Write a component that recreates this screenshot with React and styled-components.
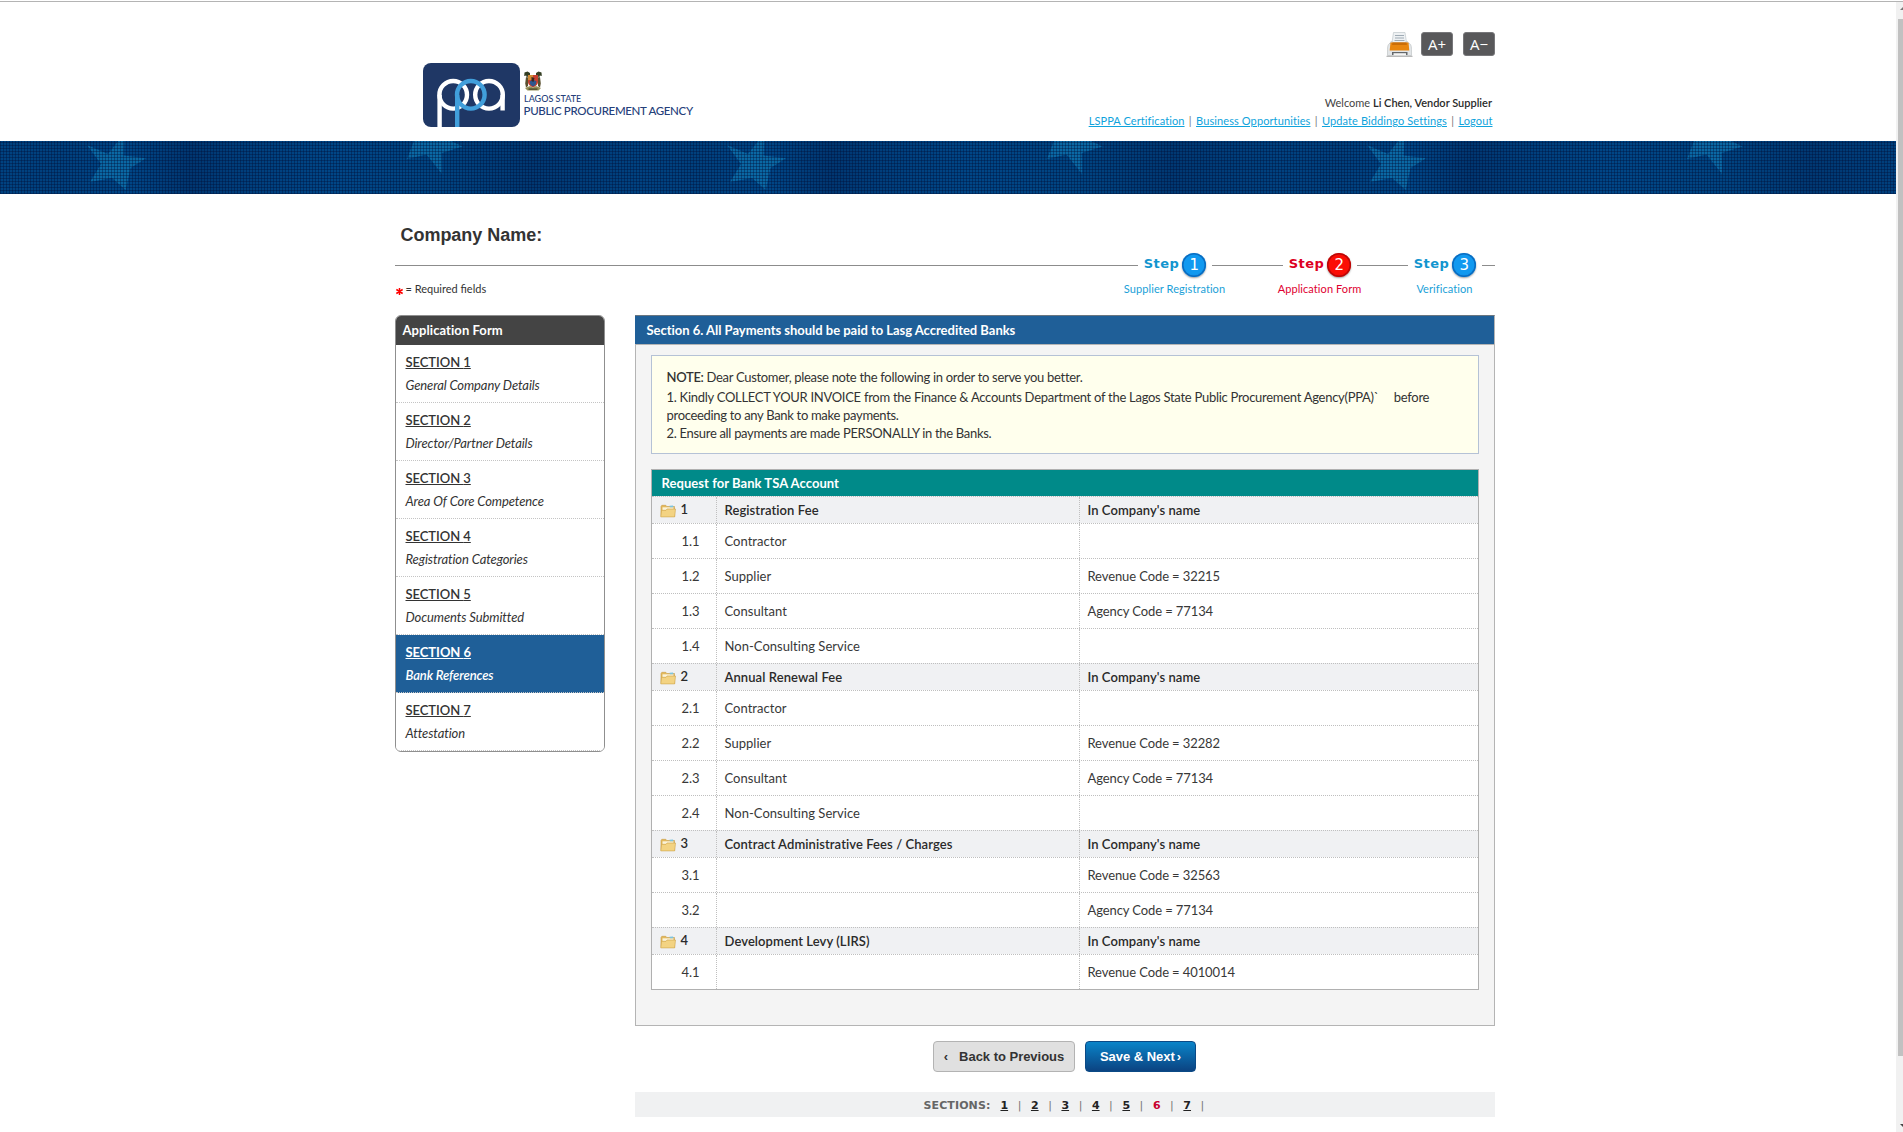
import React from 'react';
import styled, { createGlobalStyle } from 'styled-components';

const Global = createGlobalStyle`
  * { box-sizing: border-box; }
  body { margin: 0; background: #fff; color: #333; font: 13px Lato, sans-serif; }
  a { color: inherit; }
`;

const arial = '"Liberation Sans", Arial, sans-serif';
const verdana = '"DejaVu Sans", Verdana, sans-serif';

const Window = styled.div`display: flex; height: 1132px; overflow: hidden;`;
const Page = styled.div`flex: 1; min-width: 0; border-top: 1px solid #b4b4b4; margin-top: 1px;`;
const Container = styled.div`width: 1100px; margin-left: 395px;`;

/* scrollbar */
const Scrollbar = styled.div`
  width: 7px; background: #f1f1f1; border-top: 1px solid #b4b4b4; margin-top: 1px;
  display: flex; flex-direction: column; align-items: flex-end; padding-top: 17px;
`;
const Thumb = styled.div`flex: none; width: 5px; height: 1037px; background: #c1c1c1;`;
const Arrow = styled.svg`display: block; flex: none; width: 5px; height: 8px; margin-top: ${p => (p.$down ? 65 : -14)}px; margin-bottom: ${p => (p.$down ? 0 : 6)}px;`;

/* header */
const Header = styled.header`height: 139px; display: flex; justify-content: space-between;`;
const Brand = styled.div`display: flex; margin: 61px 0 0 28px; gap: 4px;`;
const BrandText = styled.div`display: flex; flex-direction: column; padding-top: 8px; color: #25407a; white-space: nowrap;`;
const BrandState = styled.div`font-size: 9px; line-height: 15px; font-weight: 500;`;
const BrandName = styled.div`font-size: 11.5px; line-height: 11px; font-weight: 500; letter-spacing: -0.33px; margin: -1px 0 0 -0.5px;`;
const HeaderRight = styled.div`display: flex; flex-direction: column; align-items: flex-end; padding-top: 30px;`;
const Tools = styled.div`display: flex; align-items: center; height: 24px; margin-bottom: 38px;`;
const SizeButton = styled.div`
  width: 32px; height: 24px; border-radius: 3px; background: #58585a; color: #fff; border: 1px solid #77777a;
  display: flex; align-items: center; justify-content: center; font: 15px "Open Sans", sans-serif; margin-left: ${p => p.$gap}px;
`;
const Welcome = styled.div`font-size: 11px; line-height: 18px; padding-right: 3px; color: #444; b { color: #2a2a2a; font-weight: 600; }`;
const Links = styled.nav`display: flex; font-size: 11px; line-height: 18px; padding-right: 2.5px; color: #0fa3dc; letter-spacing: 0.105px;`;
const Bar = styled.span`width: 11.5px; text-align: center; color: #777;`;

/* banner */
const Banner = styled.div`
  height: 53px; position: relative; overflow: hidden;
  background: repeating-linear-gradient(90deg, #004280 0, #00407d 60px, #004686 130px, #003670 190px, #003e7b 240px, #004686 330px, #004481 440px, #003872 530px, #004280 640px);
  &::after {
    content: ''; position: absolute; inset: 0;
    background:
      repeating-linear-gradient(0deg, rgba(0, 15, 55, 0.38) 0 1px, transparent 1px 3px),
      repeating-linear-gradient(90deg, rgba(0, 15, 55, 0.38) 0 1px, transparent 1px 3px);
  }
`;
const Stars = styled.svg`display: block;`;

/* title and steps */
const Title = styled.h1`margin: 0; padding: 25px 0 0 5.5px; font: bold 18px/32px ${arial}; letter-spacing: -0.03px; color: #333;`;
const Steps = styled.div`display: grid; grid-template: 29px 18px / 743px 74px 71px 74px 51px 74px 13px; align-items: center;`;
const Rule = styled.div`height: 1px; background: #8c8c8c;`;
const Step = styled.div`display: flex; align-items: center; justify-content: center; gap: 3px; color: ${p => p.$color};`;
const StepWord = styled.span`font: bold 13px/16px ${verdana}; letter-spacing: 0.5px; margin: -4px 0 0;`;
const StepDot = styled.span`
  width: 24px; height: 24px; border-radius: 50%; display: flex; align-items: center; justify-content: center;
  background: radial-gradient(circle at 50% 45%, ${p => p.$from} 0 55%, ${p => p.$to} 100%); color: #fff; font: 15px/24px ${verdana};
  margin-top: -1px; padding-bottom: 1px;
  box-shadow: inset 0 0 0 1.5px ${p => p.$edge}, 0 1px 2px rgba(0, 0, 0, 0.4);
`;
const StepLabel = styled.div`display: flex; justify-content: center; white-space: nowrap; margin-left: -1px; font-size: 11px; line-height: 18px; letter-spacing: 0.08px; color: ${p => p.$color};`;
const Required = styled.div`display: flex; font-size: 11px; line-height: 18px; padding-left: 0.5px; gap: 3px;`;
const Asterisk = styled.svg`width: 7px; height: 7px; margin-top: 8px;`;

/* columns */
const Columns = styled.div`display: flex; gap: 30px; align-items: flex-start; margin-top: 17px;`;
const Sidebar = styled.aside`width: 210px; border: 1px solid #8f8f8f; border-radius: 6px; overflow: hidden;`;
const SidebarHead = styled.div`height: 29px; padding-left: 6.5px; background: #444; color: #fff; font-weight: 700; line-height: 28px; letter-spacing: 0.07px;`;
const SideItem = styled.div`
  height: 58px; padding: 6px 9.5px 0; line-height: 23px; color: ${p => (p.$active ? '#fff' : '#333')};
  background: ${p => (p.$active ? '#1f5f98' : '#fff')}; border-bottom: 1px dotted #c4c4c4;
`;
const SideLink = styled.a`display: block; font-weight: ${p => (p.$active ? 700 : 600)}; letter-spacing: -0.05px; text-decoration: underline; text-underline-offset: 1px;`;
const SideText = styled.div`font-style: italic; font-weight: ${p => (p.$active ? 600 : 400)}; letter-spacing: -0.1px;`;

const Content = styled.main`width: 860px;`;
const Panel = styled.section`height: 711px; background: #f4f4f4; border: 1px solid #b4b4b4; border-top: 0;`;
const PanelHead = styled.h2`
  margin: 0 -1px; height: 30px; padding-left: 11.5px; background: #1f5f98; border: solid #6a7680; border-width: 1px 1px 1px 0;
  border-bottom-color: #b4b4b4; color: #fff; font: bold 13px/28px Lato, sans-serif; letter-spacing: -0.02px; border-right-color: #b4b4b4;
`;
const PanelBody = styled.div`padding: 10px 15px 0; display: flex; flex-direction: column; gap: 15px;`;
const Note = styled.div`height: 99px; border: 1px solid #b5c2d6; background: #ffffed; padding: 12px 14.5px 0; letter-spacing: -0.31px; line-height: 18px;`;
const NoteLead = styled.div`margin-bottom: 2px; b { font-weight: 600; }`;
const NoteWide = styled.div`letter-spacing: -0.28px;`;
const Before = styled.span`margin-left: 15px;`;

const Table = styled.div`border: 1px solid #b0b0b0; background: #fff;`;
const TableHead = styled.div`height: 26px; background: #008a89; color: #fff; font-weight: 700; line-height: 26px; padding-left: 9.5px; letter-spacing: 0.05px;`;
const Row = styled.div`
  display: grid; grid-template-columns: 64px 363px 1fr; height: ${p => (p.$group ? 27 : 35)}px; line-height: ${p => (p.$group ? 26 : 34)}px;
  border-top: 1px dotted #bfbfbf; background: ${p => (p.$group ? '#f0f1f3' : '#fff')}; font-weight: ${p => (p.$group ? 600 : 400)};
  color: ${p => (p.$group ? '#2a2a2a' : '#383838')};
`;
const Index = styled.div`display: flex; gap: 5px; padding-left: ${p => (p.$group ? 7.5 : 29.5)}px;`;
const IndexText = styled.span`margin-top: ${p => (p.$group ? -1 : 0)}px;`;
const Cell = styled.div`border-left: 1px dotted #bfbfbf; padding-left: 7.5px; letter-spacing: ${p => p.$ls}px;`;
const Folder = styled.svg`width: 16px; height: 14px; margin-top: 7px;`;

const Actions = styled.div`display: flex; gap: 10px; margin: 15px 0 0 298px;`;
const Button = styled.button`
  height: 31px; width: ${p => (p.$primary ? 111 : 142)}px; padding: 0 0 1px; border-radius: 4px; font: bold 13px ${arial}; letter-spacing: -0.02px; white-space: nowrap;
  border: 1px solid ${p => (p.$primary ? '#0b4a86' : '#b3b3b3')}; color: ${p => (p.$primary ? '#fff' : '#333')};
  background: ${p => (p.$primary ? 'linear-gradient(#0a84c9, #0b4381)' : '#e0e0e0')};
  display: flex; align-items: center; justify-content: center; gap: ${p => (p.$primary ? 2 : 11)}px;
`;
const SectionsBar = styled.div`
  display: flex; align-items: center; height: 25px; margin-top: 20px; padding: 1px 0 0 288.5px; background: #f0f1f2;
  font: bold 11px ${verdana}; color: #666;
`;
const SectionsWord = styled.span`width: 73.2px; letter-spacing: 0.11px;`;
const PageNo = styled.a`width: 15.2px; text-align: center; color: ${p => (p.$active ? '#c8002d' : '#222')}; text-decoration: ${p => (p.$active ? 'none' : 'underline')}; text-underline-offset: 1px;`;
const Divider = styled.span`width: 15.3px; text-align: center; font-weight: 400; color: #777;`;

const STAR_A = '87,4 108,13 124.5,-8 123.7,14.5 146,17.3 130.5,27 125.7,49 112,37 90,41 101,23';
const STAR_B = '414,0 407,18 426.5,13.5 442,33 441.7,12 462.5,5.5 451,0';

const sections = [
  'General Company Details', 'Director/Partner Details', 'Area Of Core Competence', 'Registration Categories',
  'Documents Submitted', 'Bank References', 'Attestation',
];

const rows = [
  ['1', 'Registration Fee', "In Company's name"],
  ['1.1', 'Contractor', ''], ['1.2', 'Supplier', 'Revenue Code = 32215'],
  ['1.3', 'Consultant', 'Agency Code = 77134'], ['1.4', 'Non-Consulting Service', ''],
  ['2', 'Annual Renewal Fee', "In Company's name"],
  ['2.1', 'Contractor', ''], ['2.2', 'Supplier', 'Revenue Code = 32282'],
  ['2.3', 'Consultant', 'Agency Code = 77134'], ['2.4', 'Non-Consulting Service', ''],
  ['3', 'Contract Administrative Fees / Charges', "In Company's name"],
  ['3.1', '', 'Revenue Code = 32563'], ['3.2', '', 'Agency Code = 77134'],
  ['4', 'Development Levy (LIRS)', "In Company's name"],
  ['4.1', '', 'Revenue Code = 4010014'],
];

const BLUE = ['#1295cf', '#1199f0', '#0d7fd8', '#0a6cc0'];
const RED = ['#dd0022', '#fb0d05', '#e00505', '#b80808'];

const Logo = () => (
  <svg width="97" height="64" viewBox="0 0 97 64">
    <rect width="97" height="64" rx="8" fill="#1f3765" />
    <g fill="none" stroke="#fff" strokeWidth="4.4">
      <circle cx="30.2" cy="31.8" r="13.8" />
      <path d="M16.6 64V31.8" />
      <circle cx="66" cy="31.8" r="13.8" />
      <path d="M79.6 31.8V47.500" />
    </g>
    <g fill="none" stroke="#419fdb" strokeWidth="4.4">
      <circle cx="47.800" cy="31.8" r="13.8" />
      <path d="M34.200 64V31.8" />
    </g>
  </svg>
);

const Crest = () => (
  <svg width="18" height="20" viewBox="0 0 18 20">
    <path d="M.5 1.500l3-1 2.500 1.500 0 3-2-.5-.8 4-1-4-2 .5zM17.500 1.500l-3-1-2.500 1.500 0 3 2-.5.8 4 1-4 2 .5z" fill="#333d22" />
    <path d="M2 6l2 1 0 8-2 1.500-.8-4zM16 6l-2 1 0 8 2 1.500.8-4z" fill="#5a5030" />
    <path d="M4 4h10v7c0 3-3 4.500-5 5.500C7 15.500 4 14 4 11z" fill="#c8402f" />
    <path d="M4 4h5v5H4z" fill="#d08a35" />
    <path d="M5.500 10.500l3.500-2 3.500 2-1 3.500-2.500 1.500-2.500-1.500z" fill="#2d568f" />
    <path d="M7.500 6l3 1-1 4-2-1z" fill="#3a2620" />
    <path d="M1 17l5-2 3 1.500 3-1.500 5 2-2.500 2.500H3.500z" fill="#97915a" />
    <path d="M4.500 17.500h9v1.200h-9z" fill="#403e22" />
  </svg>
);

const Printer = () => (
  <svg width="27" height="25" viewBox="0 0 27 25">
    <path d="M7.500.5h11.500l1.500 10H6z" fill="#eef1f3" stroke="#c2c8cd" strokeWidth=".7" />
    <path d="M9 3.500h9M9 6h9M8.500 8.500h10" stroke="#9fabb5" strokeWidth="1" />
    <path d="M3 12l2-3h2l-.5 3M23.500 12l-2-3h-2l.5 3" fill="#d0d3d6" />
    <path d="M1.500 17.500c0-4 1-6 2.500-6h19c1.500 0 2.500 2 2.500 6V23.500h-24z" fill="#e2e5e7" stroke="#b9bdc0" strokeWidth=".6" />
    <path d="M4.500 10.500h18l.8 8h-19.600z" fill="#e8860f" />
    <path d="M6.500 10.500h14l.4 2.500H6z" fill="#c96d08" />
    <path d="M6 20h15.500v3H6z" fill="#63676a" />
    <path d="M7.500 21.200h12.500v2.300H7.500z" fill="#f4f4f4" />
    <path d="M.5 24.300h26" stroke="#a8a8a8" strokeWidth="1" />
  </svg>
);

const FolderIcon = () => (
  <Folder viewBox="0 0 16 14">
    <path d="M1 2.500l.8-1.200h4l1 1.200h7.700v10h-13.500z" fill="#e3b95c" stroke="#c79c45" strokeWidth=".6" />
    <path d="M2.500 3.300h11v3h-11z" fill="#fbf3d8" />
    <path d="M9.500 1.800l3.500-.3.500 1.800h-3.500z" fill="#7cc4de" />
    <path d="M.8 12.900l.7-6.600h4.500l1-1.300h8.500l-.8 7.900z" fill="#f3d382" stroke="#cfa348" strokeWidth=".6" />
  </Folder>
);

const StepItem = ({ n, c }) => (
  <Step $color={c[0]}>
    <StepWord>Step</StepWord>
    <StepDot $from={c[1]} $to={c[2]} $edge={c[3]}>{n}</StepDot>
  </Step>
);

export default function App() {
  return (
    <Window>
      <Global />
      <Page>
        <Container>
          <Header>
            <Brand>
              <Logo />
              <BrandText>
                <Crest />
                <BrandState>LAGOS STATE</BrandState>
                <BrandName>PUBLIC PROCUREMENT AGENCY</BrandName>
              </BrandText>
            </Brand>
            <HeaderRight>
              <Tools>
                <Printer />
                <SizeButton $gap={8}>A+</SizeButton>
                <SizeButton $gap={10}>A−</SizeButton>
              </Tools>
              <Welcome>Welcome <b>Li Chen, Vendor Supplier</b></Welcome>
              <Links>
                <a href="#c">LSPPA Certification</a><Bar>|</Bar>
                <a href="#b">Business Opportunities</a><Bar>|</Bar>
                <a href="#s">Update Biddingo Settings</a><Bar>|</Bar>
                <a href="#l">Logout</a>
              </Links>
            </HeaderRight>
          </Header>
        </Container>
        <Banner>
          <Stars width="1896" height="53">
            {[0, 640, 1280].map(x => (
              <g key={x} transform={`translate(${x} 0)`} fill="#0a68a4">
                <polygon points={STAR_A} />
                <polygon points={STAR_B} />
              </g>
            ))}
          </Stars>
        </Banner>
        <Container>
          <Title>Company Name:</Title>
          <Steps>
            <Rule /><StepItem n={1} c={BLUE} /><Rule /><StepItem n={2} c={RED} /><Rule /><StepItem n={3} c={BLUE} /><Rule />
            <Required>
              <Asterisk viewBox="0 0 7 7"><path d="M3.500 0v7M.4 1.500l6.200 4M6.600 1.500l-6.200 4" stroke="#f00" strokeWidth="1.500" /></Asterisk>
              = Required fields
            </Required>
            <StepLabel $color="#1a9fd8">Supplier Registration</StepLabel><span />
            <StepLabel $color="#e0002f">Application Form</StepLabel><span />
            <StepLabel $color="#1a9fd8">Verification</StepLabel><span />
          </Steps>
          <Columns>
            <Sidebar>
              <SidebarHead>Application Form</SidebarHead>
              {sections.map((s, i) => (
                <SideItem key={s} $active={i === 5}>
                  <SideLink $active={i === 5} href="#s">SECTION {i + 1}</SideLink>
                  <SideText $active={i === 5}>{s}</SideText>
                </SideItem>
              ))}
            </Sidebar>
            <Content>
              <Panel>
                <PanelHead>Section 6. All Payments should be paid to Lasg Accredited Banks</PanelHead>
                <PanelBody>
                  <Note>
                    <NoteLead><b>NOTE:</b> Dear Customer, please note the following in order to serve you better.</NoteLead>
                    <NoteWide>1. Kindly COLLECT YOUR INVOICE from the Finance &amp; Accounts Department of the Lagos State Public Procurement Agency(PPA)`<Before>before</Before></NoteWide>
                    <div>proceeding to any Bank to make payments.</div>
                    <div>2. Ensure all payments are made PERSONALLY in the Banks.</div>
                  </Note>
                  <Table>
                    <TableHead>Request for Bank TSA Account</TableHead>
                    {rows.map(([n, a, b]) => {
                      const group = n.length === 1;
                      return (
                        <Row key={n} $group={group}>
                          <Index $group={group}>{group && <FolderIcon />}<IndexText $group={group}>{n}</IndexText></Index>
                          <Cell $ls={group ? 0.08 : 0.03}>{a}</Cell>
                          <Cell $ls={group ? 0.06 : -0.1}>{b}</Cell>
                        </Row>
                      );
                    })}
                  </Table>
                </PanelBody>
              </Panel>
              <Actions>
                <Button><span>‹</span>Back to Previous</Button>
                <Button $primary>Save &amp; Next<span>›</span></Button>
              </Actions>
              <SectionsBar>
                <SectionsWord>SECTIONS:</SectionsWord>
                {[1, 2, 3, 4, 5, 6, 7].map(n => (
                  <React.Fragment key={n}><PageNo $active={n === 6}>{n}</PageNo><Divider>|</Divider></React.Fragment>
                ))}
              </SectionsBar>
            </Content>
          </Columns>
        </Container>
      </Page>
      <Scrollbar>
        <Arrow viewBox="0 0 5 8"><path d="M2 5l3-3v3z" fill="#777" /></Arrow>
        <Thumb />
        <Arrow $down viewBox="0 0 5 8"><path d="M2 3h3v3z" fill="#444" /></Arrow>
      </Scrollbar>
    </Window>
  );
}
